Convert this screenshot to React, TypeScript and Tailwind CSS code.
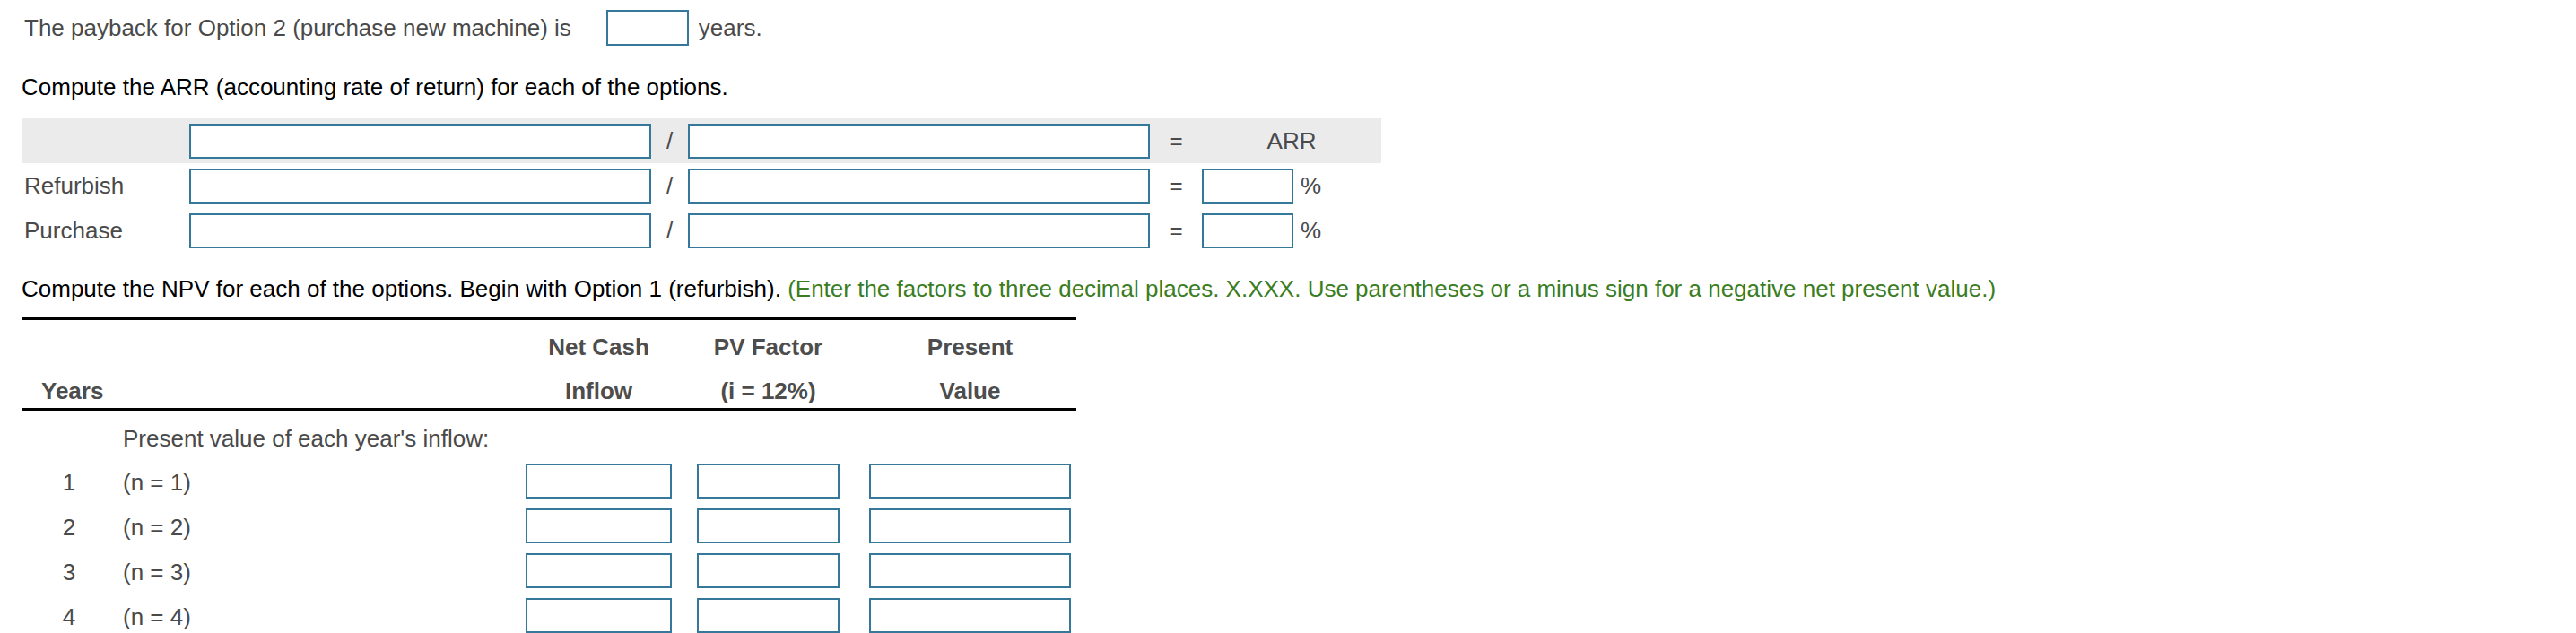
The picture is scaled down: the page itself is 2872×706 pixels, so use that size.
import React from 'react';

function Box({ className }: { className: string }) {
  return (
    <input
      type="text"
      aria-label="answer"
      className={`h-[39px] border-2 border-[#36789a] bg-white outline-none ${className}`}
    />
  );
}

const years = [1, 2, 3, 4];

export default function App() {
  return (
    <div className="min-h-screen bg-white pl-[24px] pt-[11px] font-['Liberation_Sans',Arial,sans-serif] text-[26px] leading-[30px] text-[#4a4a4a]">
      {/* Payback line */}
      <div className="flex h-[40px] items-center pl-[3px]">
        <span>The payback for Option 2 (purchase new machine) is</span>
        <Box className="ml-[39px] h-[40px] w-[92px]" />
        <span className="ml-[11px]">years.</span>
      </div>

      {/* ARR */}
      <div className="mt-[31px] text-black">
        Compute the ARR (accounting rate of return) for each of the options.
      </div>

      <div className="mt-[20px] w-[1516px]">
        <div className="grid h-[50px] grid-cols-[187px_515px_41px_515px_58px_200px] items-center bg-[#ebebeb]">
          <div />
          <Box className="w-[515px]" />
          <div className="text-center">/</div>
          <Box className="w-[515px]" />
          <div className="text-center">=</div>
          <div className="text-center">ARR</div>
        </div>
        {['Refurbish', 'Purchase'].map(label => (
          <div
            key={label}
            className="grid h-[50px] grid-cols-[187px_515px_41px_515px_58px_200px] items-center"
          >
            <div className="pl-[3px]">{label}</div>
            <Box className="w-[515px]" />
            <div className="text-center">/</div>
            <Box className="w-[515px]" />
            <div className="text-center">=</div>
            <div className="flex items-center">
              <Box className="w-[102px]" />
              <span className="ml-[8px]">%</span>
            </div>
          </div>
        ))}
      </div>

      {/* NPV */}
      <div className="mt-[25px] text-black">
        Compute the NPV for each of the options. Begin with Option 1 (refurbish).{' '}
        <span className="text-[#3a7d22]">
          (Enter the factors to three decimal places. X.XXX. Use parentheses or a minus sign for a
          negative net present value.)
        </span>
      </div>

      <div className="mt-[17px] w-[1176px] border-t-[3px] border-black">
        <div className="border-b-[3px] border-black font-bold text-[#4d4d4d]">
          <div className="grid h-[60px] grid-cols-[562px_163px_28px_159px_33px_225px_6px] items-center">
            <div />
            <div className="text-center">Net Cash</div>
            <div />
            <div className="text-center">PV Factor</div>
            <div />
            <div className="text-center">Present</div>
            <div />
          </div>
          <div className="grid h-[38px] grid-cols-[562px_163px_28px_159px_33px_225px_6px] items-center">
            <div className="pl-[22px]">Years</div>
            <div className="text-center">Inflow</div>
            <div />
            <div className="text-center">(i = 12%)</div>
            <div />
            <div className="text-center">Value</div>
            <div />
          </div>
        </div>

        <div className="flex h-[53px] items-center pl-[113px] pt-[9px]">
          Present value of each year's inflow:
        </div>

        {years.map(n => (
          <div
            key={n}
            className="grid h-[50px] grid-cols-[562px_163px_28px_159px_33px_225px_6px] items-center"
          >
            <div className="flex items-center pt-[4px]">
              <span className="w-[106px] text-center">{n}</span>
              <span className="pl-[7px]">(n = {n})</span>
            </div>
            <Box className="w-[163px]" />
            <div />
            <Box className="w-[159px]" />
            <div />
            <Box className="w-[225px]" />
            <div />
          </div>
        ))}
      </div>
    </div>
  );
}
